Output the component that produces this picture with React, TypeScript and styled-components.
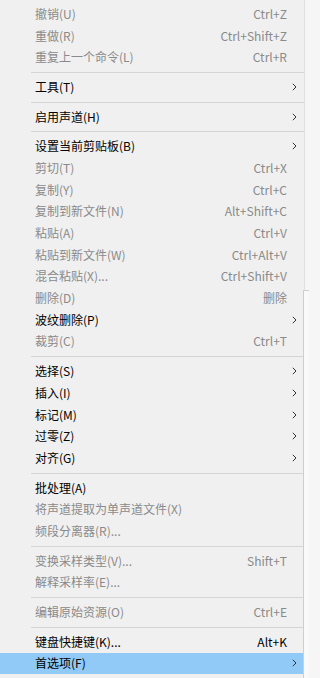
import React from 'react';
import styled, { createGlobalStyle } from 'styled-components';

type Entry =
  | { sep: true }
  | {
      label: string;
      shortcut?: string;
      sub?: boolean;
      disabled?: boolean;
      active?: boolean;
    };

const entries: Entry[] = [
  { label: '撤销(U)', shortcut: 'Ctrl+Z', disabled: true },
  { label: '重做(R)', shortcut: 'Ctrl+Shift+Z', disabled: true },
  { label: '重复上一个命令(L)', shortcut: 'Ctrl+R', disabled: true },
  { sep: true },
  { label: '工具(T)', sub: true },
  { sep: true },
  { label: '启用声道(H)', sub: true },
  { sep: true },
  { label: '设置当前剪贴板(B)', sub: true },
  { label: '剪切(T)', shortcut: 'Ctrl+X', disabled: true },
  { label: '复制(Y)', shortcut: 'Ctrl+C', disabled: true },
  { label: '复制到新文件(N)', shortcut: 'Alt+Shift+C', disabled: true },
  { label: '粘贴(A)', shortcut: 'Ctrl+V', disabled: true },
  { label: '粘贴到新文件(W)', shortcut: 'Ctrl+Alt+V', disabled: true },
  { label: '混合粘贴(X)...', shortcut: 'Ctrl+Shift+V', disabled: true },
  { label: '删除(D)', shortcut: '删除', disabled: true },
  { label: '波纹删除(P)', sub: true },
  { label: '裁剪(C)', shortcut: 'Ctrl+T', disabled: true },
  { sep: true },
  { label: '选择(S)', sub: true },
  { label: '插入(I)', sub: true },
  { label: '标记(M)', sub: true },
  { label: '过零(Z)', sub: true },
  { label: '对齐(G)', sub: true },
  { sep: true },
  { label: '批处理(A)' },
  { label: '将声道提取为单声道文件(X)', disabled: true },
  { label: '频段分离器(R)...', disabled: true },
  { sep: true },
  { label: '变换采样类型(V)...', shortcut: 'Shift+T', disabled: true },
  { label: '解释采样率(E)...', disabled: true },
  { sep: true },
  { label: '编辑原始资源(O)', shortcut: 'Ctrl+E', disabled: true },
  { sep: true },
  { label: '键盘快捷键(K)...', shortcut: 'Alt+K' },
  { label: '首选项(F)', sub: true, active: true },
];

const App = () => {
  return (
    <Page>
      <GlobalStyle />
      <Menu>
        {entries.map((entry, i) => {
          if ('sep' in entry) return <Separator key={i} />;
          return (
            <Item key={i} $disabled={entry.disabled} $active={entry.active}>
              <Label>{entry.label}</Label>
              <Shortcut>{entry.shortcut}</Shortcut>
              <ArrowCell>
                {entry.sub && (
                  <svg width="5" height="8" viewBox="0 0 5 8">
                    <polyline
                      points="0.8,0.8 4,4 0.8,7.2"
                      fill="none"
                      stroke="#333"
                      strokeWidth="1"
                    />
                  </svg>
                )}
              </ArrowCell>
            </Item>
          );
        })}
      </Menu>
      <BehindPanel />
    </Page>
  );
};

const GlobalStyle = createGlobalStyle`
  html, body {
    margin: 0;
    padding: 0;
    background: #f6f6f6;
  }
`;

const Page = styled.div`
  position: relative;
  width: 309px;
  height: 678px;
  overflow: hidden;
  font-family: 'Noto Sans CJK SC', 'Noto Sans', sans-serif;
  font-size: 12px;
`;

const Menu = styled.div`
  width: 305px;
  height: 678px;
  box-sizing: border-box;
  padding-top: 3px;
  background: #f0f0f0;
  border-right: 1px solid #e0e0e0;
  display: flex;
  flex-direction: column;
`;

const Item = styled.div<{ $disabled?: boolean; $active?: boolean }>`
  display: grid;
  grid-template-columns: 1fr auto 15px;
  align-items: center;
  height: 21.7px;
  padding-left: 35px;
  padding-right: 2px;
  color: ${(p) => (p.$disabled ? '#8a8a8a' : '#000')};
  background: ${(p) => (p.$active ? '#91c9f7' : 'transparent')};
  line-height: 1;
  white-space: nowrap;
`;

const Label = styled.span``;

const Shortcut = styled.span`
  text-align: right;
`;

const ArrowCell = styled.span`
  display: flex;
  justify-content: center;
  align-items: center;
`;

const Separator = styled.div`
  height: 1px;
  margin: 4px 0 3px 31px;
  background: #d5d5d5;
`;

const BehindPanel = styled.div`
  position: absolute;
  top: 290px;
  left: 303px;
  right: 0;
  bottom: 0;
  background: #f9f9f9;
  border-left: 1px solid #cfcfcf;
  border-top: 1px solid #cfcfcf;
`;

export default App;
